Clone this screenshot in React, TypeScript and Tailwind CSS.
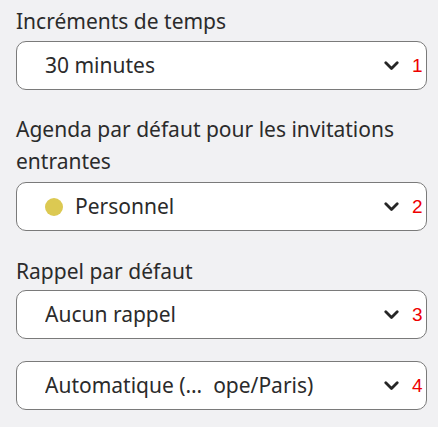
const Chevron = () => (
  <svg width="15" height="10" viewBox="0 0 15 10" className="shrink-0">
    <path d="M1.8 1.8 L7.5 7.5 L13.2 1.8" fill="none" stroke="#262626" strokeWidth="2.8" strokeLinecap="round" strokeLinejoin="round" />
  </svg>
);

type SelectProps = { value: string; index: number; dot?: boolean };

const SelectBox = ({ value, index, dot }: SelectProps) => (
  <div className="flex h-[49px] w-[411px] items-center rounded-[10px] border border-[#7a7a7a] bg-white pl-[28px]">
    {dot && <span className="mr-[12px] h-[18px] w-[18px] rounded-full bg-[#dcc952]" />}
    <span className="flex-1 truncate text-[21px] text-[#2b2b2b]">{value}</span>
    <Chevron />
    <span className="ml-[13px] mr-[4px] w-[10px] font-['Liberation_Sans',Arial,sans-serif] text-[19px] leading-none text-[#ee0000]">
      {index}
    </span>
  </div>
);

export default function App() {
  return (
    <div className="min-h-[427px] w-[438px] bg-[#f1f1f3] pl-4 pt-[5px] font-['Noto_Sans',sans-serif] text-[#2b2b2b]">
      <div className="text-[21px] leading-[32px]">Incréments de temps</div>
      <div className="mt-[4px]">
        <SelectBox value="30 minutes" index={1} />
      </div>

      <div className="mt-[23px] w-[411px] text-[21px] leading-[32px]">
        Agenda par défaut pour les invitations entrantes
      </div>
      <div className="mt-[5px]">
        <SelectBox value="Personnel" index={2} dot />
      </div>

      <div className="mt-[24px] text-[21px] leading-[32px]">Rappel par défaut</div>
      <div className="mt-[3px]">
        <SelectBox value="Aucun rappel" index={3} />
      </div>

      <div className="mt-[22px]">
        <SelectBox value={'Automatique (…\u00a0 ope/Paris)'} index={4} />
      </div>
    </div>
  );
}
